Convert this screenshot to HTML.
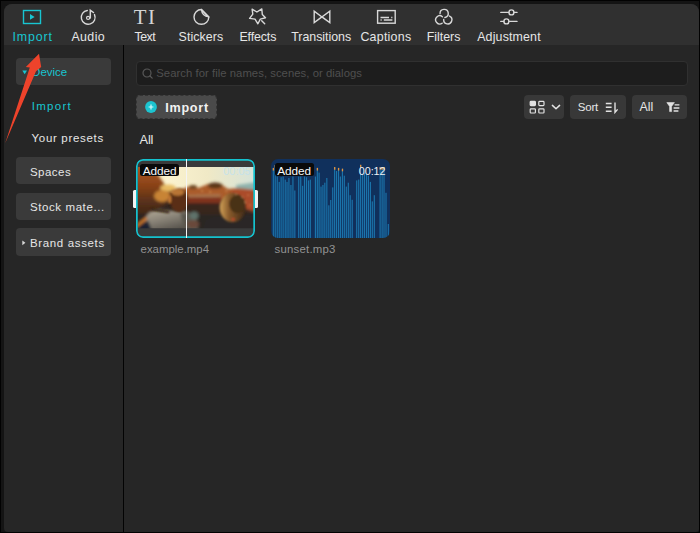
<!DOCTYPE html>
<html><head><meta charset="utf-8"><title>Media panel</title>
<style>
*{box-sizing:border-box;margin:0;padding:0}
html,body{width:700px;height:533px;overflow:hidden;background:#020202}
body{position:relative;font-family:"Liberation Sans",sans-serif;font-size:12.5px;color:#e6e6e6}
.frame{position:absolute;left:1px;top:1px;width:697.8px;height:530.5px;background:#141414}
.panel{position:absolute;left:4px;top:4px;width:694.8px;height:527.5px;background:#262626;border-radius:8px 8px 3px 4px;overflow:hidden}
.hdr{position:absolute;left:0;top:0;width:100%;height:41.3px;background:#303030}
.vdiv{position:absolute;left:118.9px;top:41.3px;width:1.4px;height:490px;background:#030303}
.abs{position:absolute}
.ico{position:absolute;overflow:visible}
.sbtn{position:absolute;left:12px;width:95px;height:27.5px;border-radius:4px;background:#3a3a3a}
.tx{position:absolute;white-space:nowrap;line-height:16px;height:16px;color:#e6e6e6}
.ph{color:#4f4f4f}
.bold{font-weight:bold;color:#f2f2f2}
.wht{color:#fafafa}
.dur1{color:rgba(190,225,240,.8)}
.dur2{color:#eef2f6}
.fname{color:#939393}
.teal{color:#18c5d1}
.search{position:absolute;left:132px;top:56.5px;width:552px;height:25px;border-radius:4px;background:#1d1d1d;border:1px solid #303030}
.tbtn{position:absolute;top:91px;height:24px;border-radius:4px;background:#383838}
</style></head><body>
<div class="frame"></div>
<div class="panel">
  <div class="hdr"></div>
  <div class="vdiv"></div>

  <!-- top tabs (coordinates relative to panel: subtract 4) -->

  <!-- icons -->
  <svg class="ico" style="left:0;top:0" width="600" height="42" viewBox="4 4 600 42" fill="none" stroke="#d8d8d8" stroke-width="1.4" stroke-linecap="round" stroke-linejoin="round">
    <!-- import -->
    <rect x="23.5" y="10.5" width="17" height="13" stroke="#18c5d1" stroke-width="1.4" stroke-linejoin="miter"/>
    <path d="M30 14 L34.6 16.9 L30 19.8 Z" fill="#18c5d1" stroke="none"/>
    <!-- audio -->
    <path d="M87.3 10.55 A6.9 6.9 0 1 0 94.5 14.6"/>
    <circle cx="88.1" cy="17.9" r="1.55" stroke-width="1.2"/>
    <path d="M90.3 17.9 V10.3 L93.5 12.5" stroke-width="1.5" stroke-linejoin="miter"/>
    <!-- stickers -->
    <path d="M201.4 9.5 A7.4 7.4 0 1 0 208.8 16.9 Z" stroke-linejoin="round"/>
    <path d="M201.4 9.5 Q202.2 16.2 208.8 16.9 M201.4 9.5 L208.8 16.9" />
    <!-- effects star -->
    <path d="M252.1 9.1 L256.9 12 L261.8 8.9 L262.3 14.5 L265.5 17.7 L260.3 19.1 L257.9 23.8 L255 19.1 L249.6 18.4 L252.8 14.2 Z" stroke-width="1.4"/>
    <path d="M261.7 20.7 L264.7 23.8" stroke-width="1.4"/>
    <!-- transitions -->
    <path d="M314.2 11.2 V22.6 L321.9 16.9 Z M329.8 11.2 V22.6 L321.9 16.9 Z" stroke-linejoin="miter"/>
    <!-- captions -->
    <rect x="377.6" y="10.6" width="17.6" height="12.6" stroke-width="1.4" stroke-linejoin="miter"/>
    <path d="M380.5 17.4 H389 M391.2 17.4 H392.4 M380.5 20.1 H381.7 M383.8 20.1 H392.4" stroke-width="1.5" stroke-linecap="butt"/>
    <!-- filters -->
    <path d="M440.05 13.5 A4.1 4.1 0 1 1 444.9 17.5 M442.4 16.7 A4.1 4.1 0 1 0 442.15 23.2 M443.7 19.5 A4.1 4.1 0 1 0 449.5 16.1" stroke-width="1.4"/>
    <!-- adjustment -->
    <path d="M500.8 12.4 H508.8 M514 12.4 H517 M500.8 21.4 H503.8 M509 21.4 H517"/>
    <circle cx="511.4" cy="12.4" r="2.5"/>
    <circle cx="506.4" cy="21.4" r="2.5"/>
  </svg>
  <div class="abs" style="left:129.8px;top:1.15px;font-family:'Liberation Serif',serif;font-size:20.8px;line-height:24px;letter-spacing:1.5px;color:#d4d4d4;white-space:nowrap">TI</div>

  <!-- sidebar -->
  <div class="sbtn" style="top:53.5px"></div>
  <svg class="ico" style="left:17.5px;top:65.5px" width="6" height="5" viewBox="0 0 6 5"><path d="M0.3 0.4 H5 L2.65 4.2 Z" fill="#18c5d1"/></svg>
  <div class="sbtn" style="top:152.9px"></div>
  <div class="sbtn" style="top:188.7px"></div>
  <div class="sbtn" style="top:224.2px"></div>
  <svg class="ico" style="left:18px;top:236px" width="4" height="6" viewBox="0 0 4 6"><path d="M0.3 0.4 V5.2 L3.4 2.8 Z" fill="#d8d8d8"/></svg>

  <!-- search -->
  <div class="search"></div>
  <svg class="ico" style="left:138px;top:64px" width="12" height="12" viewBox="0 0 12 12" fill="none" stroke="#585858" stroke-width="1.2" stroke-linecap="round"><circle cx="5" cy="5" r="4"/><path d="M8 8 L10.2 10.2"/></svg>

  <!-- import button -->
  <div class="abs" style="left:132px;top:91px;width:80.5px;height:24px;border-radius:4px;background:#4a4a4a;border:1px dashed #343434"></div>
  <svg class="ico" style="left:141px;top:97px" width="12" height="12" viewBox="0 0 12 12"><circle cx="6" cy="6" r="5.9" fill="#1cc4d0"/><path d="M6 3.6 V8.4 M3.6 6 H8.4" stroke="#dcfafc" stroke-width="1.15"/></svg>

  <!-- right tool buttons -->
  <div class="tbtn" style="left:520px;width:40px"></div>
  <div class="tbtn" style="left:566px;width:55.5px"></div>
  <div class="tbtn" style="left:627.6px;width:55.4px"></div>
  <svg class="ico" style="left:520px;top:91px" width="164" height="24" viewBox="524 95 164 24" fill="none" stroke="#e2e2e2" stroke-width="1.2">
    <rect x="530.2" y="101.4" width="5.2" height="4.2" rx="0.8" fill="#e2e2e2"/>
    <rect x="538.8" y="101.4" width="5.2" height="4.2" rx="0.8"/>
    <rect x="530.2" y="108.8" width="5.2" height="4.2" rx="0.8"/>
    <rect x="538.8" y="108.8" width="5.2" height="4.2" rx="0.8"/>
    <path d="M552.4 105.4 L556 108.8 L559.6 105.4" stroke-width="1.5" stroke-linecap="round" stroke-linejoin="round"/>
    <!-- sort -->
    <path d="M605.8 103.4 H611.6 M605.8 107.3 H611.6 M605.8 111.2 H611.6" stroke-width="1.5"/>
    <path d="M615 102.4 V112.4 L617.6 109.4" stroke-width="1.4" stroke-linejoin="miter"/>
    <!-- filter -->
    <path d="M666.8 102.6 H674.4 L671.6 106.4 V111.6 H669.6 V106.4 Z" fill="#e2e2e2" stroke-width="0.6"/>
    <path d="M674.6 104.8 H679.4 M673.6 108 H679.4 M673.6 111 H678.4" stroke-width="1.3"/>
  </svg>

  <!-- All label -->

  <!-- video thumb -->
  <div class="abs" style="left:132px;top:155px;width:119.4px;height:79px;border-radius:7px;background:#3a3a3a;overflow:hidden">
    <svg class="abs" style="left:1.6px;top:8.4px" width="116.2" height="61.2" viewBox="0 0 116 61" preserveAspectRatio="none">
      <defs>
        <filter id="bl" x="-10%" y="-10%" width="120%" height="120%"><feGaussianBlur stdDeviation="1.7"/></filter>
        <filter id="bl2" x="-10%" y="-10%" width="120%" height="120%"><feGaussianBlur stdDeviation="1"/></filter>
        <linearGradient id="sky" x1="0" x2="1" y1="0" y2="0"><stop offset="0" stop-color="#efd494"/><stop offset="0.25" stop-color="#fbf3cf"/><stop offset="0.6" stop-color="#f0e9c6"/><stop offset="1" stop-color="#d6e3d9"/></linearGradient>
        <linearGradient id="hill" x1="0" x2="0" y1="0" y2="1"><stop offset="0" stop-color="#b05a22"/><stop offset="0.4" stop-color="#8a4218"/><stop offset="0.7" stop-color="#56301a"/><stop offset="1" stop-color="#3a2416"/></linearGradient>
        <linearGradient id="hair" x1="0" x2="1" y1="0" y2="0"><stop offset="0" stop-color="#d2a258"/><stop offset="0.35" stop-color="#8a5c2c"/><stop offset="1" stop-color="#3e2816"/></linearGradient>
        <linearGradient id="shirt" x1="0" x2="0.6" y1="0" y2="1"><stop offset="0" stop-color="#b4aa98"/><stop offset="0.45" stop-color="#8a8478"/><stop offset="1" stop-color="#504c46"/></linearGradient>
        <clipPath id="cp"><rect width="116" height="61"/></clipPath>
      </defs>
      <g clip-path="url(#cp)">
      <rect width="116" height="61" fill="#33261f"/>
      <rect width="116" height="26" fill="url(#sky)"/>
      <g filter="url(#bl)">
        <path d="M98 18 L120 15 L120 24 L98 23Z" fill="#8fb3ad"/>
        <path d="M-4 -4 L13 -4 L20 8 L27 18 L36 24 L30 36 L10 48 L-4 52Z" fill="url(#hill)"/>
        <ellipse cx="30" cy="21" rx="8" ry="3.5" fill="#e8bc64"/>
        <ellipse cx="24" cy="29" rx="8" ry="6" fill="#c88436"/>
        <path d="M42 23 L52 19 L60 21 L70 17 L84 18 L90 22 L100 21 L120 23 L120 33 L42 33Z" fill="#aa5c2c"/>
        <ellipse cx="77" cy="18.5" rx="7.5" ry="3" fill="#5a3418"/>
        <ellipse cx="55" cy="20" rx="4" ry="2" fill="#6a4420"/>
        <path d="M92 23 L120 23 L120 46 L104 41 L96 31Z" fill="#ab4c2a"/>
        <path d="M48 28.2 L82 27.4 L83 29.6 L48 30.4Z" fill="#a87c54"/>
        <path d="M44 30.5 L83 29.8 L83 36.5 L44 37.5Z" fill="#80301c"/>
        <rect x="44" y="36" width="42" height="14" fill="#38281e"/>
        <rect x="-4" y="47" width="124" height="18" fill="#2b2522"/>
        <path d="M8 50 Q10 44 20 43 L46 44 Q60 47 60 64 L10 64 Q6 57 8 50Z" fill="url(#shirt)"/>
        <path d="M42 45 L58 47 L60 64 L46 64Z" fill="#5c5850"/>
        <ellipse cx="56" cy="48.5" rx="4.5" ry="4" fill="#5e726a"/>
        <ellipse cx="55" cy="57" rx="6" ry="4" fill="#6a4a3a"/>
        <path d="M68 53 Q80 46 92 52 L120 45 L120 64 L64 64Z" fill="#2a2528"/>
        <path d="M-2 58 L8 49.5 L9.5 52 L-2 61Z" fill="#d07a2c"/>
        <path d="M-2 62 L10 53 L14 64Z" fill="#1e2430"/>
      </g>
      <g filter="url(#bl2)">
        <path d="M13 42 L31 45" stroke="#36200f" stroke-width="2.2" fill="none"/>
        <ellipse cx="41" cy="33" rx="9.3" ry="12" fill="#5a2e18"/>
        <ellipse cx="39.5" cy="25" rx="6.5" ry="3.6" fill="#b87434"/>
        <path d="M33 27 Q31 33 33 40" stroke="#2a180e" stroke-width="1.4" fill="none"/>
        <ellipse cx="31.5" cy="32" rx="1.6" ry="4.5" fill="#c87c34"/>
        <ellipse cx="94.5" cy="40.5" rx="13" ry="14.5" fill="url(#hair)"/>
        <ellipse cx="99" cy="37" rx="8" ry="9" fill="#4a3018"/>
        <circle cx="95" cy="52" r="1.5" fill="#c2452c"/>
        <g fill="#e8b070"><circle cx="98" cy="27" r=".7"/><circle cx="104" cy="30" r=".7"/><circle cx="110" cy="28" r=".7"/><circle cx="107" cy="35" r=".7"/><circle cx="112" cy="38" r=".7"/><circle cx="64" cy="24" r=".7"/><circle cx="72" cy="25" r=".7"/><circle cx="88" cy="24" r=".7"/></g>
      </g>
      </g>
    </svg>
    <div class="abs" style="left:0;top:0;width:100%;height:100%;box-shadow:inset 0 0 0 1.7px #14c2ce;border-radius:7px"></div>
    <div class="abs" style="left:49.6px;top:0;width:1.4px;height:79px;background:#f4f4f4"></div>
  </div>
  <div class="abs" style="left:129px;top:185.5px;width:3.4px;height:18px;border-radius:1.5px 0 0 1.5px;background:#f2f2f2"></div>
  <div class="abs" style="left:251px;top:185.5px;width:3.4px;height:18px;border-radius:0 1.5px 1.5px 0;background:#f2f2f2"></div>
  <div class="abs" style="left:135.7px;top:159.6px;width:38.9px;height:12.9px;border-radius:2.5px;background:#0a0a0a"></div>

  <!-- audio thumb -->
  <div class="abs" style="left:267px;top:155px;width:119.2px;height:79px;border-radius:7px;background:#10305c;overflow:hidden">
    <svg class="abs" style="left:0;top:0" width="119.2" height="79" viewBox="0 0 119.2 79" fill="#1b74ab">
<rect x="1.75" y="8.9" width="1.15" height="70.1"/>
<rect x="1.75" y="8.9" width="1.3" height="2.6" fill="#e8923a"/>
<rect x="3.65" y="6.0" width="1.15" height="73.0"/>
<rect x="3.65" y="6.0" width="1.3" height="2.6" fill="#e8923a"/>
<rect x="5.65" y="17.5" width="1.15" height="61.5"/>
<rect x="7.65" y="22.9" width="1.15" height="56.1"/>
<rect x="9.55" y="18.2" width="1.15" height="60.8"/>
<rect x="11.55" y="17.5" width="1.15" height="61.5"/>
<rect x="13.65" y="20.6" width="1.15" height="58.4"/>
<rect x="15.45" y="22.9" width="1.15" height="56.1"/>
<rect x="17.35" y="19.0" width="1.15" height="60.0"/>
<rect x="19.35" y="26.0" width="1.15" height="53.0"/>
<rect x="21.35" y="17.5" width="1.15" height="61.5"/>
<rect x="23.25" y="31.5" width="1.15" height="47.5"/>
<rect x="27.15" y="17.5" width="1.15" height="61.5"/>
<rect x="29.15" y="17.5" width="1.15" height="61.5"/>
<rect x="31.05" y="26.8" width="1.15" height="52.2"/>
<rect x="32.95" y="17.5" width="1.15" height="61.5"/>
<rect x="34.95" y="18.2" width="1.15" height="60.8"/>
<rect x="36.95" y="21.4" width="1.15" height="57.6"/>
<rect x="38.75" y="20.6" width="1.15" height="58.4"/>
<rect x="43.85" y="17.5" width="1.15" height="61.5"/>
<rect x="45.75" y="8.9" width="1.15" height="70.1"/>
<rect x="45.75" y="8.9" width="1.3" height="2.6" fill="#e8923a"/>
<rect x="47.55" y="13.6" width="1.15" height="65.4"/>
<rect x="49.45" y="27.6" width="1.15" height="51.4"/>
<rect x="51.35" y="26.0" width="1.15" height="53.0"/>
<rect x="53.25" y="23.7" width="1.15" height="55.3"/>
<rect x="55.25" y="19.0" width="1.15" height="60.0"/>
<rect x="57.25" y="46.3" width="1.15" height="32.7"/>
<rect x="59.15" y="41.0" width="1.15" height="38.0"/>
<rect x="61.15" y="28.4" width="1.15" height="50.6"/>
<rect x="63.05" y="8.1" width="1.15" height="70.9"/>
<rect x="63.05" y="8.1" width="1.3" height="2.6" fill="#e8923a"/>
<rect x="64.95" y="12.0" width="1.15" height="67.0"/>
<rect x="66.95" y="8.9" width="1.15" height="70.1"/>
<rect x="66.95" y="8.9" width="1.3" height="2.6" fill="#e8923a"/>
<rect x="68.85" y="17.5" width="1.15" height="61.5"/>
<rect x="70.85" y="9.7" width="1.15" height="69.3"/>
<rect x="70.85" y="9.7" width="1.3" height="2.6" fill="#e8923a"/>
<rect x="72.75" y="16.7" width="1.15" height="62.3"/>
<rect x="74.75" y="27.6" width="1.15" height="51.4"/>
<rect x="76.75" y="23.7" width="1.15" height="55.3"/>
<rect x="78.65" y="36.2" width="1.15" height="42.8"/>
<rect x="80.65" y="40.8" width="1.15" height="38.2"/>
<rect x="85.15" y="21.4" width="1.15" height="57.6"/>
<rect x="87.15" y="20.6" width="1.15" height="58.4"/>
<rect x="89.05" y="5.8" width="1.15" height="73.2"/>
<rect x="89.05" y="5.8" width="1.3" height="2.6" fill="#e8923a"/>
<rect x="91.05" y="15.1" width="1.15" height="63.9"/>
<rect x="92.95" y="13.6" width="1.15" height="65.4"/>
<rect x="94.95" y="15.1" width="1.15" height="63.9"/>
<rect x="96.85" y="16.7" width="1.15" height="62.3"/>
<rect x="98.85" y="22.9" width="1.15" height="56.1"/>
<rect x="100.75" y="42.4" width="1.15" height="36.6"/>
<rect x="102.75" y="36.2" width="1.15" height="42.8"/>
<rect x="108.55" y="8.1" width="1.15" height="70.9"/>
<rect x="108.55" y="8.1" width="1.3" height="2.6" fill="#e8923a"/>
<rect x="110.55" y="8.1" width="1.15" height="70.9"/>
<rect x="110.55" y="8.1" width="1.3" height="2.6" fill="#e8923a"/>
<rect x="112.45" y="8.1" width="1.15" height="70.9"/>
<rect x="112.45" y="8.1" width="1.3" height="2.6" fill="#e8923a"/>
<rect x="114.45" y="33.8" width="1.15" height="45.2"/>
<rect x="116.75" y="65.0" width="1.15" height="14.0"/>
    </svg>
  </div>
  <div class="abs" style="left:270.7px;top:159.2px;width:38.9px;height:13.2px;border-radius:2.5px;background:#0a0a0a"></div>

    <div class="tx teal" id="tb_import" style="left:8.50px;top:24.93px;font-size:12.4px;letter-spacing:0.864px">Import</div>
  <div class="tx" id="tb_audio" style="left:67.40px;top:24.93px;font-size:12.4px;letter-spacing:0.405px">Audio</div>
  <div class="tx" id="tb_text" style="left:130.60px;top:24.93px;font-size:12.4px;letter-spacing:-0.540px">Text</div>
  <div class="tx" id="tb_stickers" style="left:174.60px;top:24.93px;font-size:12.4px;letter-spacing:0.077px">Stickers</div>
  <div class="tx" id="tb_effects" style="left:235.40px;top:24.93px;font-size:12.4px;letter-spacing:-0.120px">Effects</div>
  <div class="tx" id="tb_trans" style="left:287.30px;top:24.93px;font-size:12.4px;letter-spacing:-0.036px">Transitions</div>
  <div class="tx" id="tb_capt" style="left:356.40px;top:24.93px;font-size:12.4px;letter-spacing:0.257px">Captions</div>
  <div class="tx" id="tb_filters" style="left:422.80px;top:24.93px;font-size:12.4px;letter-spacing:-0.030px">Filters</div>
  <div class="tx" id="tb_adj" style="left:473.20px;top:24.93px;font-size:12.4px;letter-spacing:0.160px">Adjustment</div>
  <div class="tx teal" id="sb_device" style="left:28.10px;top:59.89px;font-size:11.5px;letter-spacing:-0.000px">Device</div>
  <div class="tx teal" id="sb_import" style="left:27.70px;top:94.04px;font-size:11.5px;letter-spacing:1.296px">Import</div>
  <div class="tx" id="sb_presets" style="left:27.50px;top:125.99px;font-size:11.5px;letter-spacing:0.687px">Your presets</div>
  <div class="tx" id="sb_spaces" style="left:25.90px;top:159.99px;font-size:11.5px;letter-spacing:0.504px">Spaces</div>
  <div class="tx" id="sb_stock" style="left:25.90px;top:194.89px;font-size:11.5px;letter-spacing:0.600px">Stock mate...</div>
  <div class="tx" id="sb_brand" style="left:25.90px;top:230.89px;font-size:11.5px;letter-spacing:0.655px">Brand assets</div>
  <div class="tx ph" id="search_ph" style="left:152.30px;top:60.96px;font-size:11.3px;letter-spacing:0.040px">Search for file names, scenes, or dialogs</div>
  <div class="tx bold" id="btn_import" style="left:161.30px;top:96.01px;font-size:12.6px;letter-spacing:0.720px">Import</div>
  <div class="tx" id="lb_sort" style="left:573.80px;top:95.04px;font-size:11.5px;letter-spacing:-0.240px">Sort</div>
  <div class="tx" id="lb_all2" style="left:635.60px;top:95.03px;font-size:12.4px;letter-spacing:-0.090px">All</div>
  <div class="tx" id="lb_all" style="left:135.60px;top:127.94px;font-size:12.8px;letter-spacing:-0.180px">All</div>
  <div class="tx wht" id="v_added" style="left:138.70px;top:159.09px;font-size:11.8px;letter-spacing:-0.045px">Added</div>
  <div class="tx dur1" id="v_dur" style="left:219.20px;top:158.93px;font-size:10.8px;letter-spacing:0.090px">00:05</div>
  <div class="tx fname" id="v_name" style="left:136.60px;top:237.07px;font-size:11.4px;letter-spacing:0.000px">example.mp4</div>
  <div class="tx wht" id="a_added" style="left:273.30px;top:159.09px;font-size:11.8px;letter-spacing:-0.090px">Added</div>
  <div class="tx dur2" id="a_dur" style="left:354.80px;top:158.93px;font-size:10.8px;letter-spacing:-0.090px">00:12</div>
  <div class="tx fname" id="a_name" style="left:270.60px;top:237.07px;font-size:11.4px;letter-spacing:0.220px">sunset.mp3</div>

  <!-- red annotation arrow -->
  <svg class="ico" style="left:0;top:46px" width="50" height="100" viewBox="4 50 50 100"><path d="M39 53.8 L25.8 67 L29.8 67.6 L5.2 143.2 L36 71.2 L41.2 67 Z" fill="#ee432b"/></svg>
</div>
</body></html>
